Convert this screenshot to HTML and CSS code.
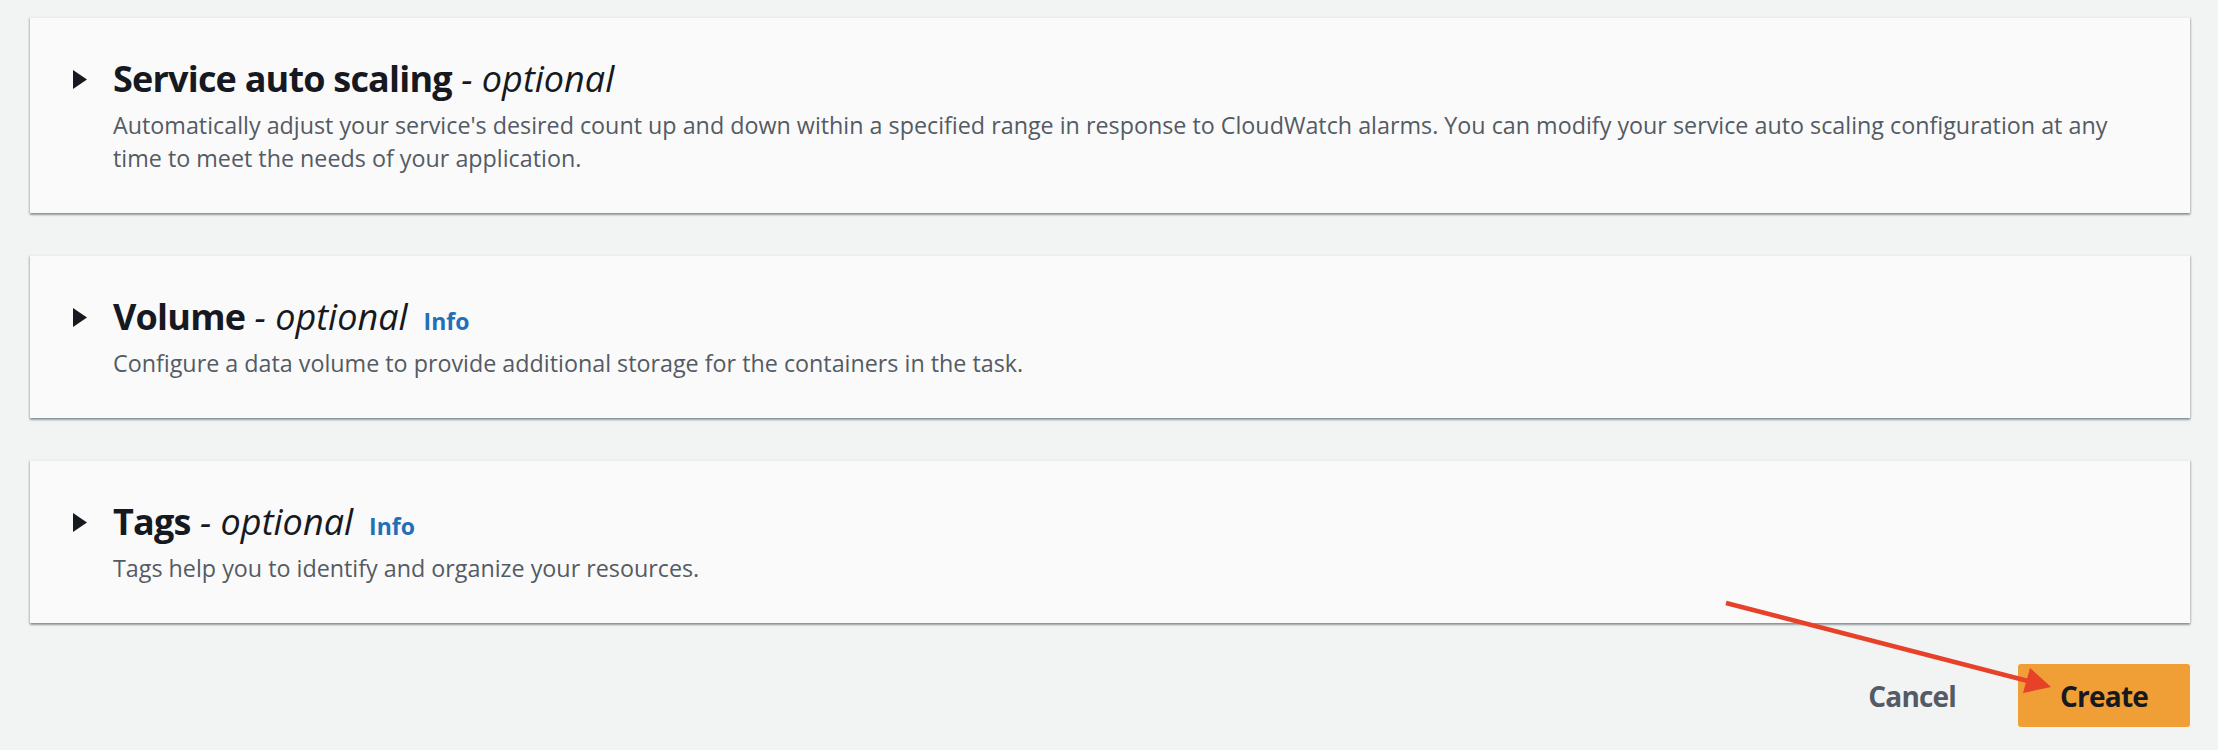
FILE: index.html
```html
<!DOCTYPE html>
<html lang="en">
<head>
<meta charset="utf-8">
<title>Create service</title>
<link rel="stylesheet" href="styles.css">
</head>
<body>
<main class="page">
  <section class="panel">
    <div class="panel-head">
      <span class="caret"><svg width="14" height="19" viewBox="0 0 14 19"><path d="M0 0 L14 9.5 L0 19 Z" fill="#16191f"/></svg></span>
      <h2 class="panel-title"><span class="name">Service auto scaling</span> <em class="opt">- optional</em></h2>
    </div>
    <p class="panel-desc">Automatically adjust your service's desired count up and down within a specified range in response to CloudWatch alarms. You can modify your service auto scaling configuration at any time to meet the needs of your application.</p>
  </section>

  <section class="panel">
    <div class="panel-head">
      <span class="caret"><svg width="14" height="19" viewBox="0 0 14 19"><path d="M0 0 L14 9.5 L0 19 Z" fill="#16191f"/></svg></span>
      <h2 class="panel-title"><span class="name">Volume</span> <em class="opt">- optional</em></h2>
      <a class="info" href="#">Info</a>
    </div>
    <p class="panel-desc">Configure a data volume to provide additional storage for the containers in the task.</p>
  </section>

  <section class="panel">
    <div class="panel-head">
      <span class="caret"><svg width="14" height="19" viewBox="0 0 14 19"><path d="M0 0 L14 9.5 L0 19 Z" fill="#16191f"/></svg></span>
      <h2 class="panel-title"><span class="name">Tags</span> <em class="opt">- optional</em></h2>
      <a class="info" href="#">Info</a>
    </div>
    <p class="panel-desc">Tags help you to identify and organize your resources.</p>
  </section>

  <div class="actions">
    <button class="btn btn-link" type="button">Cancel</button>
    <button class="btn btn-primary" type="button">Create</button>
  </div>

  <svg class="annotation" width="2218" height="750" viewBox="0 0 2218 750">
    <line x1="1726" y1="603" x2="2028" y2="681" stroke="#e8412a" stroke-width="4.5" stroke-linecap="butt"/>
    <polygon points="2051,687 2030,668 2023,693" fill="#e8412a"/>
  </svg>
</main>
</body>
</html>
```

FILE: styles.css
```css
html, body {
  margin: 0;
  padding: 0;
}

body {
  background: #f2f3f3;
  font-family: "Open Sans", "Liberation Sans", sans-serif;
  color: #16191f;
  width: 2218px;
  height: 750px;
  overflow: hidden;
}

.page {
  position: relative;
  padding: 17px 28px 0 30px;
  display: flex;
  flex-direction: column;
  gap: 42px;
}

.panel {
  background: #fafafa;
  border-top: 1px solid #eaeded;
  box-shadow: 0 2px 2px rgba(0, 28, 36, 0.3), 1px 1px 2px rgba(0, 28, 36, 0.15), -1px 1px 2px rgba(0, 28, 36, 0.15);
  padding: 39px 60px 38px 43px;
}

.panel-head {
  display: flex;
  align-items: baseline;
  height: 44px;
}

.caret {
  width: 14px;
  height: 19px;
  margin-right: 26px;
  align-self: center;
  display: flex;
}

.caret svg {
  display: block;
}

.panel-title {
  margin: 0;
  font-size: 36px;
  line-height: 44px;
  font-weight: 700;
  color: #16191f;
}

.name {
  letter-spacing: -0.8px;
}

.opt {
  font-weight: 400;
  font-style: italic;
}

.info {
  margin-left: 16px;
  font-size: 23px;
  font-weight: 700;
  color: #1f70b9;
  text-decoration: none;
}

.panel-desc {
  margin: 8px 0 0 40px;
  font-size: 23.3px;
  line-height: 33px;
  color: #545b64;
}

.actions {
  display: flex;
  justify-content: flex-end;
  align-items: center;
  gap: 20px;
  margin-top: -1px;
}

.btn {
  height: 63px;
  border: none;
  border-radius: 3px;
  padding: 0 42px;
  font-family: "Open Sans", "Liberation Sans", sans-serif;
  font-size: 28px;
  font-weight: 700;
  letter-spacing: -0.8px;
  background: transparent;
}

.btn-link {
  color: #545b64;
}

.btn-primary {
  background: #f09e36;
  color: #16191f;
}

.annotation {
  position: absolute;
  left: 0;
  top: 0;
  pointer-events: none;
}
```
